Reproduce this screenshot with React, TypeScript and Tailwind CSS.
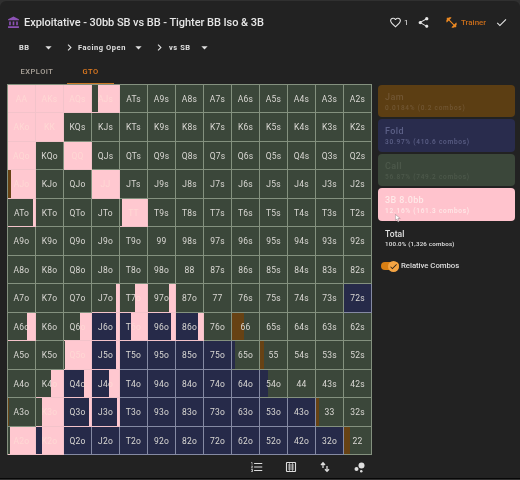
import {
  MdAccountBalance,
  MdArrowDropDown,
  MdBubbleChart,
  MdCheck,
  MdChevronRight,
  MdFavoriteBorder,
  MdFitnessCenter,
  MdFormatListNumbered,
  MdShare,
} from 'react-icons/md';

type Action = 'call' | 'fold' | 'raise' | 'jam';
type Segment = [Action, number];

const RANKS = 'AKQJT98765432'.split('');

const actionClass: Record<Action, string> = {
  call: 'bg-[#3b473a]',
  fold: 'bg-[#262a49]',
  raise: 'bg-[#ffc8d0]',
  jam: 'bg-[#674214]',
};

const pure = (a: Action): Segment[] => [[a, 100]];
const mix = (a: Action, at: number, b: Action): Segment[] => [[a, at], [b, 100 - at]];

const strategy: Record<string, Segment[]> = {
  AA: pure('raise'), AKs: pure('raise'), AQs: pure('raise'), AJs: mix('call', 23, 'raise'),
  AKo: pure('raise'), KK: pure('raise'), AQo: pure('raise'), QQ: pure('raise'),
  AJo: mix('jam', 12, 'raise'), JJ: pure('raise'),
  ATo: mix('call', 93, 'raise'), TT: mix('call', 8, 'raise'),
  J7o: mix('call', 89, 'raise'), T7o: mix('call', 57, 'raise'), '97o': mix('call', 76, 'raise'),
  '72s': pure('fold'),
  A6o: mix('call', 69, 'raise'), Q6o: mix('call', 60, 'raise'), J6o: mix('fold', 89, 'raise'),
  T6o: mix('fold', 42, 'raise'), '96o': mix('fold', 87, 'raise'), '86o': mix('fold', 82, 'raise'),
  '66': mix('jam', 46, 'call'),
  Q5o: mix('call', 3, 'raise'), J5o: mix('fold', 89, 'raise'), T5o: pure('fold'), '95o': pure('fold'),
  '85o': pure('fold'), '75o': pure('fold'), '65o': mix('fold', 11, 'call'), '55': mix('jam', 14, 'call'),
  K4o: mix('call', 54, 'raise'), Q4o: mix('fold', 75, 'raise'), J4o: mix('fold', 62, 'raise'),
  '54o': mix('fold', 28, 'call'),
  A3o: mix('jam', 3, 'call'), K3o: mix('call', 23, 'raise'), Q3o: mix('fold', 91, 'raise'),
  J3o: mix('fold', 92, 'raise'), '33': mix('jam', 11, 'call'),
  A2o: mix('call', 6, 'raise'), K2o: mix('fold', 22, 'raise'), '22': mix('jam', 22, 'call'),
};

for (const h of ['T4o', '94o', '84o', '74o', '64o', 'T3o', '93o', '83o', '73o', '63o', '53o', '43o',
  'Q2o', 'J2o', 'T2o', '92o', '82o', '72o', '62o', '52o', '42o', '32o']) {
  strategy[h] = pure('fold');
}

function handName(r: number, c: number) {
  if (r === c) return RANKS[r] + RANKS[c];
  return r < c ? RANKS[r] + RANKS[c] + 's' : RANKS[c] + RANKS[r] + 'o';
}

function HandCell({ hand }: { hand: string }) {
  const segments = strategy[hand] ?? pure('call');
  const last = segments[segments.length - 1];
  const line = last[0] === 'raise' ? 'border-[#f3c3ca]' : last[0] === 'fold' ? 'border-[#858aa3]' : 'border-[#84917f]';
  return (
    <div className={`grid border-r border-b ${line}`}>
      <div className="col-start-1 row-start-1 flex">
        {segments.map(([action, width], i) => (
          <div key={i} className={actionClass[action]} style={{ width: `${width}%` }} />
        ))}
      </div>
      {/* Lighten keeps labels quiet wherever they cross a pale raise bar. */}
      <span className="z-10 col-start-1 row-start-1 place-self-center pt-px text-[8.5px] leading-none tracking-[0.2px] text-[#dad8d4] mix-blend-lighten">
        {hand}
      </span>
    </div>
  );
}

function ActionCard({ name, stats, tone }: { name: string; stats: string; tone: string }) {
  return (
    <div className={`flex h-[32.4px] flex-col rounded-[4px] pt-[8px] pl-[7px] ${tone}`}>
      <span className="text-[9px] leading-[9px] font-medium tracking-[0.4px]">{name}</span>
      <span className="mt-[2px] text-[6.5px] leading-[8px] font-medium tracking-[0.75px] whitespace-nowrap">{stats}</span>
    </div>
  );
}

export default function App() {
  return (
    <div className="h-[480px] w-[520px] overflow-hidden bg-[#303030] pt-px font-['Roboto','Liberation_Sans',sans-serif]">
      <div className="flex h-[478px] flex-col rounded-t-[6px] border-b border-[#080808] bg-[#222222]">
        <header className="flex h-[42px] shrink-0 items-center pt-px pl-[7px] text-[#e6e6e6]">
          <MdAccountBalance className="size-[13px] text-[#8c52b5]" />
          <h1 className="ml-1 w-[365px] text-[11px] leading-none font-medium tracking-[-0.05px] whitespace-nowrap">
            Exploitative - 30bb SB vs BB - Tighter BB Iso &amp; 3B
          </h1>
          <MdFavoriteBorder className="size-[13px]" />
          <span className="ml-[2px] w-[13px] text-[8px]">1</span>
          <MdShare className="size-[13px]" />
          <MdFitnessCenter className="ml-[15px] size-[13px] text-[#ee8a22]" />
          <span className="ml-[3px] w-[34px] text-[8px] font-medium text-[#c96d1b]">Trainer</span>
          <MdCheck className="size-[13px]" />
        </header>

        <nav className="flex h-[9px] shrink-0 items-center text-[7.5px] font-bold tracking-[0.55px] text-[#e0e0e0]">
          <span className="ml-[19px] w-[22px]">BB</span>
          <MdArrowDropDown className="size-[15px]" />
          <MdChevronRight className="ml-[7px] size-[13px]" />
          <span className="ml-[2px] w-[53px] whitespace-nowrap">Facing Open</span>
          <MdArrowDropDown className="size-[15px]" />
          <MdChevronRight className="ml-[7px] size-[13px]" />
          <span className="ml-[3px] w-[28px] whitespace-nowrap">vs SB</span>
          <MdArrowDropDown className="size-[15px]" />
        </nav>

        <div className="ml-[7px] flex h-8 w-[364px] shrink-0 text-[7.5px] font-medium tracking-[0.5px]">
          <div className="flex w-[60px] justify-center pt-[14px] text-[#aaa39a]">EXPLOIT</div>
          <div className="flex w-[47px] justify-center border-b border-[#cc7926] pt-[14px] text-[#e37c20]">GTO</div>
        </div>

        <main className="flex shrink-0 pl-[7px]">
          <div className="grid h-[371px] w-[365px] grid-cols-13 grid-rows-13 border-t border-l border-[#84917f]">
            {RANKS.flatMap((_, r) => RANKS.map((_, c) => <HandCell key={`${r}-${c}`} hand={handName(r, c)} />))}
          </div>
          <aside className="ml-[6px] flex w-[137px] flex-col gap-[2px] pt-px">
            <ActionCard name="Jam" stats="0.0184% (0.2 combos)" tone="bg-[#5c3e13] text-[#715633]" />
            <ActionCard name="Fold" stats="30.97% (410.6 combos)" tone="bg-[#292c4d] text-[#5c6087]" />
            <ActionCard name="Call" stats="56.87% (749.2 combos)" tone="bg-[#3b473a] text-[#4d594b]" />
            <div className="relative">
              <ActionCard name="3B 8.0bb" stats="12.16% (161.3 combos)" tone="bg-[#ffc3cd] text-[#ffe9e8]" />
              <svg className="absolute top-[26px] left-[17px] h-[9px] w-[6px]" viewBox="0 0 8 11">
                <path d="M.5 0v8l2-2 1.5 4 1.5-.6L4 5.5h3z" fill="#fff" stroke="#8a747b" strokeWidth=".6" />
              </svg>
            </div>
            <div className="flex flex-col pt-[7px] pl-[7px] text-[#e2e2e2]">
              <span className="text-[8.5px] leading-[9px] font-medium tracking-[0.1px]">Total</span>
              <span className="mt-px text-[6.2px] leading-[8px] font-medium tracking-[0.2px]">100.0% (1,326 combos)</span>
            </div>
            <label className="mt-[10px] flex h-[13px] items-center pl-[3px] text-[#dddddd]">
              <span className="flex h-[8px] w-[18px] items-center justify-end rounded-full bg-[#d87f14]">
                <span className="flex size-[11px] shrink-0 items-center justify-center rounded-full bg-[#f4a443]">
                  <MdCheck className="size-[9px] text-[#302418]" />
                </span>
              </span>
              <span className="ml-[2px] text-[7.8px] font-medium tracking-[-0.05px] whitespace-nowrap">Relative Combos</span>
            </label>
          </aside>
        </main>

        <footer className="flex h-[22px] shrink-0 items-center pt-[2px] pl-[250px] text-[#dedede]">
          <MdFormatListNumbered className="size-[14px]" />
          <svg className="ml-[21px] size-3" viewBox="0 0 12 12" fill="none" stroke="currentColor">
            <rect x="1.5" y="1.5" width="9" height="9" rx=".5" strokeWidth="1.1" />
            <path d="M3 4h6M3 6h6M3 8h6" strokeWidth=".8" />
            <path d="M4.5 2v8M7.5 2v8" strokeWidth=".6" />
          </svg>
          <svg className="ml-[22px] size-3" viewBox="0 0 12 12" fill="none" stroke="currentColor" strokeWidth="1.3">
            <path d="M4 7V2M2 4l2-2.2L6 4M8 5v5M6 8.2l2 2.2 2-2.2" />
          </svg>
          <MdBubbleChart className="ml-[21px] size-[15px]" />
        </footer>
      </div>
    </div>
  );
}
